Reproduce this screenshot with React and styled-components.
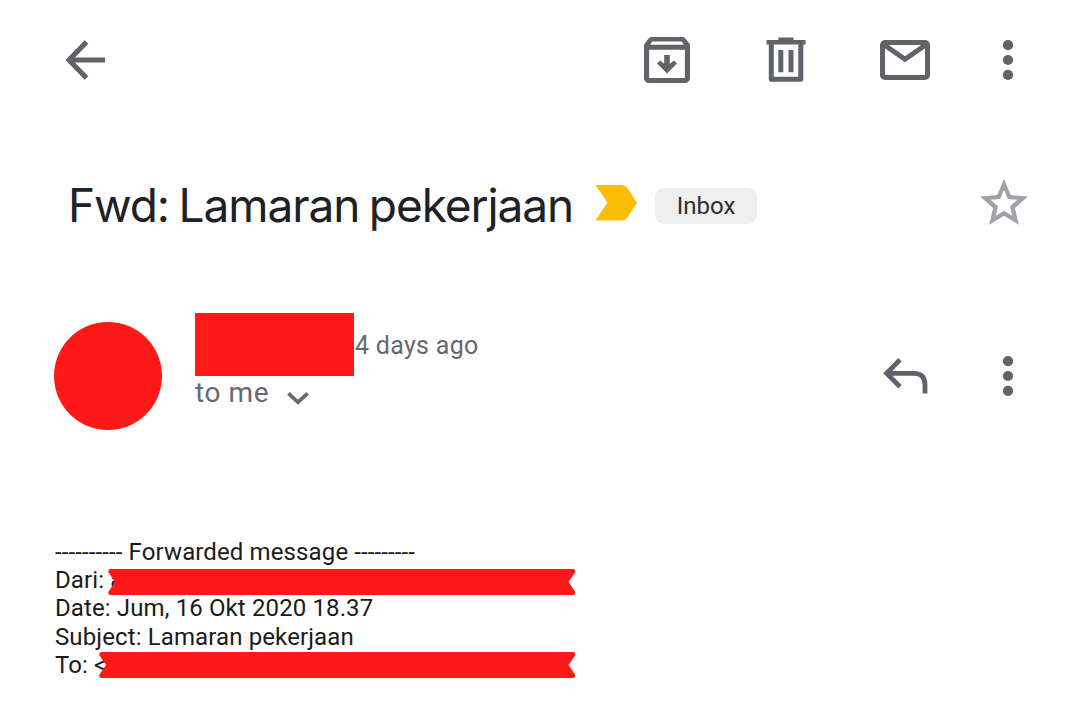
import React from 'react'
import styled, { createGlobalStyle } from 'styled-components'

const ICON = '#606368'
const RED = '#ff1919'

const GlobalStyle = createGlobalStyle`
	body {
		margin: 0;
		background-color: #fefefe;
		font-family: Roboto, "Liberation Sans", sans-serif;
	}
`

const Page = styled.main`
	width: 1080px;
	height: 711px;
	overflow: hidden;
	display: flex;
	flex-direction: column;
	color: #202124;
`

const Row = styled.div`
	display: flex;
	align-items: center;
	box-sizing: border-box;
	height: ${props => props.$height}px;
	padding: 0 ${props => props.$right}px 0 ${props => props.$left}px;
`

const Actions = styled.div`
	display: flex;
	align-items: center;
	margin-left: auto;
	gap: ${props => props.$gap || 0}px;
`

const IconButton = styled.button`
	display: flex;
	flex-shrink: 0;
	padding: 0;
	border: 0;
	background: none;
	color: ${props => props.$color || ICON};
	margin-top: ${props => props.$shift || 0}px;
	margin-left: ${props => props.$before || 0}px;

	svg {
		display: block;
	}
`

const Subject = styled.h1`
	margin: 0;
	width: 527px;
	font-family: Inter, Roboto, sans-serif;
	font-size: 46px;
	font-weight: 400;
	line-height: 56px;
	letter-spacing: -1.1px;
	word-spacing: -2.2px;
	white-space: nowrap;
`

const Marker = styled.svg`
	display: block;
	margin-top: -5px;
`

const Chip = styled.span`
	width: 102px;
	height: 36px;
	margin: 2px 0 0 18px;
	border-radius: 9px;
	background-color: #eeeeee;
	color: #2d2e30;
	font-size: 24px;
	line-height: 36px;
	text-align: center;
`

const Avatar = styled.div`
	width: 108px;
	height: 108px;
	border-radius: 50%;
	background-color: ${RED};
`

const Sender = styled.div`
	height: 127px;
	margin-left: 33px;
	color: #67696d;
`

const SenderTop = styled.div`
	display: flex;
	align-items: center;
`

const HiddenName = styled.div`
	width: 158.5px;
	height: 63.5px;
	background-color: ${RED};
`

const SentAt = styled.span`
	margin: 2px 0 0 1.5px;
	font-size: 25px;
	letter-spacing: 0.3px;
`

const Recipient = styled.div`
	display: flex;
	align-items: center;
	height: 32px;
	font-size: 28px;
	letter-spacing: 0.6px;
`

const Chevron = styled.svg`
	margin: 13px 0 0 18px;
`

const Message = styled.section`
	padding: 76px 0 0 55px;
	color: #1b1b1b;
	font-size: 24px;
	line-height: 28.2px;
	letter-spacing: 0.12px;
`

const Line = styled.div`
	display: flex;
	height: 28.2px;
	white-space: pre;
`

const RibbonShape = styled.svg`
	flex-shrink: 0;
	margin: ${props => props.$top}px 0 0 ${props => props.$left}px;
`

const MoreIcon = () => (
	<svg width="10" height="40" viewBox="0 0 10 40" fill="currentColor">
		<circle cx="5" cy="5.1" r="5.1" />
		<circle cx="5" cy="20" r="5.1" />
		<circle cx="5" cy="34.9" r="5.1" />
	</svg>
)

const TrashIcon = () => (
	<svg width="40" height="46" viewBox="0 0 40 46" fill="currentColor">
		<path d="M12.5 0.5H27.5V3H39.5V7.5H0.5V3H12.5Z" />
		<path d="M5.3 6V42.3H34.8V6" fill="none" stroke="currentColor" strokeWidth="5" strokeLinejoin="round" />
		<path d="M12.3 13H17.3V35.3H12.3ZM22.5 13H27.5V35.3H22.5Z" />
	</svg>
)

// bar with a notch cut in each end, covers an address
const Ribbon = ({ width, top, left }) => (
	<RibbonShape $top={top} $left={left} width={width} height="26" viewBox={`0 0 ${width} 26`}>
		<path
			fill={RED}
			d={`M2 0H${width - 2}Q${width + 0.5} 1 ${width - 0.5} 3.5L${width - 7} 13L${width - 0.5} 22.5Q${width + 0.5} 25 ${width - 2} 26H2Q-.5 25 .5 22.5L7 13L.5 3.5Q-.5 1 2 0Z`}
		/>
	</RibbonShape>
)

export default () => {
	return (
		<Page>
			<GlobalStyle />
			<Row as="header" $height={120} $left={65} $right={67}>
				<IconButton $shift={-1} aria-label="Back">
					<svg width="41" height="40" viewBox="0 0 41 40" fill="none" stroke="currentColor" strokeWidth="5.2">
						<path d="M40 20H4M21.5 2L4 20L21.5 38" />
					</svg>
				</IconButton>
				<Actions>
					<IconButton aria-label="Archive">
						<svg width="46" height="46" viewBox="3 3 18 18" fill="currentColor">
							<path d="M20.54 5.23l-1.39-1.68C18.88 3.21 18.47 3 18 3H6c-.47 0-.88.21-1.16.55L3.46 5.23C3.17 5.57 3 6.02 3 6.5V19c0 1.1.9 2 2 2h14c1.1 0 2-.9 2-2V6.5c0-.48-.17-.93-.46-1.27zM6.24 4.8h11.52l.83 1.2H5.42l.82-1.2zM5 19V8h14v11H5zM15.9 13.4l-3.9 3.9-3.9-3.9 1.2-1.2 1.6 1.3V10h2.2v3.5l1.6-1.3z" />
						</svg>
					</IconButton>
					<IconButton $before={76} aria-label="Delete">
						<TrashIcon />
					</IconButton>
					<IconButton $before={74} aria-label="Mark as unread">
						<svg width="50" height="40" viewBox="0 0 50 40" fill="none" stroke="currentColor" strokeWidth="5">
							<rect x="2.5" y="2.5" width="45" height="35" rx="2.5" />
							<path d="M3 4L25 19.3L47 4" />
						</svg>
					</IconButton>
					<IconButton $before={73} aria-label="More">
						<MoreIcon />
					</IconButton>
				</Actions>
			</Row>

			<Row $height={170} $left={68} $right={52}>
				<Subject>Fwd: Lamaran pekerjaan</Subject>
				<Marker width="42" height="36" viewBox="0 0 42 36">
					<path d="M.5 0H27Q30 0 32 2.5L42 17.8L32 33Q30 35.5 27 35.5H.5L12.5 17.8Z" fill="#fbbc04" />
				</Marker>
				<Chip>Inbox</Chip>
				<Actions>
					<IconButton $color="#9fa2a7" $shift={-6} aria-label="Star">
						<svg width="48" height="46" viewBox="2 2 20 19" fill="currentColor">
							<path d="M22 9.24l-7.19-.62L12 2 9.19 8.63 2 9.24l5.46 4.73L5.82 21 12 17.27 18.18 21l-1.63-7.03L22 9.24zM12 15.1l-3.4 2.1.9-3.9-3.1-2.7 4-.35L12 6.5l1.6 3.75 4 .35-3.1 2.7.9 3.9L12 15.1z" />
						</svg>
					</IconButton>
				</Actions>
			</Row>

			<Row $height={172} $left={54} $right={67}>
				<Avatar />
				<Sender>
					<SenderTop>
						<HiddenName />
						<SentAt>4 days ago</SentAt>
					</SenderTop>
					<Recipient>
						to me
						<Chevron width="22" height="13" viewBox="0 0 22 13" fill="none" stroke="currentColor" strokeWidth="3.6">
							<path d="M1.4 1.4L11 10.2L20.6 1.4" />
						</Chevron>
					</Recipient>
				</Sender>
				<Actions $gap={75}>
					<IconButton aria-label="Reply">
						<svg width="45" height="36" viewBox="0 0 45 36" fill="none" stroke="currentColor" strokeWidth="4.8">
							<path d="M17 1.8L3.6 15.3L17 28.8M3.6 15.3H31Q42 15.3 42 27V35.5" />
						</svg>
					</IconButton>
					<IconButton aria-label="More">
						<MoreIcon />
					</IconButton>
				</Actions>
			</Row>

			<Message>
				<Line>---------- Forwarded message ---------</Line>
				<Line>Dari: a<Ribbon width={467.5} top={2.8} left={-15.2} /></Line>
				<Line>Date: Jum, 16 Okt 2020 18.37</Line>
				<Line>Subject: Lamaran pekerjaan</Line>
				<Line>To: &lt;<Ribbon width={476.5} top={0.9} left={-7.6} /></Line>
			</Message>
		</Page>
	)
}
